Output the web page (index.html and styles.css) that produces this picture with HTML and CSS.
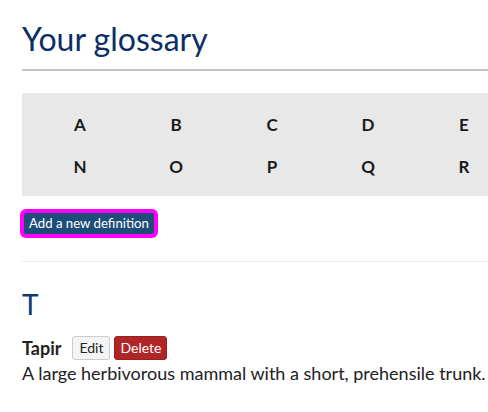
FILE: index.html
```html
<!DOCTYPE html>
<html lang="en">
<head>
<meta charset="utf-8">
<title>Your glossary</title>
<link rel="stylesheet" href="styles.css">
</head>
<body>
<main class="page">
  <h1 class="title">Your glossary</h1>
  <nav class="alphabet">
    <a href="#">A</a><a href="#">B</a><a href="#">C</a><a href="#">D</a><a href="#">E</a><a href="#">F</a><a href="#">G</a><a href="#">H</a><a href="#">I</a><a href="#">J</a><a href="#">K</a><a href="#">L</a><a href="#">M</a>
    <a href="#">N</a><a href="#">O</a><a href="#">P</a><a href="#">Q</a><a href="#">R</a><a href="#">S</a><a href="#">T</a><a href="#">U</a><a href="#">V</a><a href="#">W</a><a href="#">X</a><a href="#">Y</a><a href="#">Z</a>
  </nav>
  <button class="btn-add" type="button">Add a new definition</button>
  <hr class="divider">
  <section class="letter-section">
    <h2 class="letter-heading">T</h2>
    <div class="term-row">
      <span class="term">Tapir</span>
      <button class="btn btn-edit" type="button">Edit</button>
      <button class="btn btn-delete" type="button">Delete</button>
    </div>
    <p class="definition">A large herbivorous mammal with a short, prehensile trunk.</p>
  </section>
</main>
</body>
</html>
```
FILE: styles.css
```css
html, body {
  margin: 0;
  padding: 0;
  background: #ffffff;
  overflow-x: hidden;
}
body {
  font-family: Lato, "Noto Sans", sans-serif;
  color: #222222;
}
.page {
  width: 1270px;
  padding-left: 22px;
}
.title {
  margin: 20px 0 0 0;
  padding-bottom: 11px;
  font-size: 32px;
  line-height: 1.2;
  font-weight: 400;
  color: #0b2f66;
  border-bottom: 2px solid #c4c4c4;
}
.alphabet {
  margin-top: 22px;
  background: #e8e8e8;
  padding: 11px 10px 8px 10px;
  display: grid;
  grid-template-columns: repeat(13, 96px);
}
.alphabet a {
  display: block;
  text-align: center;
  font-weight: 700;
  font-size: 17px;
  line-height: 24px;
  padding: 9px 0;
  color: #1a1a1a;
  text-decoration: none;
}
.btn-add {
  display: block;
  margin-top: 15px;
  font-family: Lato, "Noto Sans", sans-serif;
  font-size: 13.2px;
  line-height: 21px;
  padding: 0 5px;
  color: #ffffff;
  background: #1d4e7a;
  border: 2px solid #ff00ff;
  border-radius: 4px;
  box-shadow: 0 0 0 2px #ff00ff;
}
.divider {
  margin: 25px 0 0 0;
  border: 0;
  border-top: 1px solid #ececec;
  height: 0;
}
.letter-heading {
  margin: 26px 0 0 0;
  font-size: 28px;
  line-height: 1.2;
  font-weight: 400;
  color: #0b3a75;
}
.term-row {
  display: flex;
  align-items: center;
  margin-top: 14px;
}
.term {
  font-weight: 700;
  font-size: 18px;
  margin-right: 11px;
}
.btn {
  font-family: Lato, "Noto Sans", sans-serif;
  font-size: 14px;
  line-height: 20px;
  padding: 1px 6px;
  border-radius: 3px;
  margin-right: 4px;
}
.btn-edit {
  background: #f4f4f4;
  border: 1px solid #cccccc;
  color: #222222;
}
.btn-delete {
  background: #b02525;
  border: 1px solid #9a1f1f;
  color: #ffffff;
  padding: 1px 5px;
}
.definition {
  margin: 3px 0 0 0;
  font-size: 18px;
  line-height: 1.2;
}
```
